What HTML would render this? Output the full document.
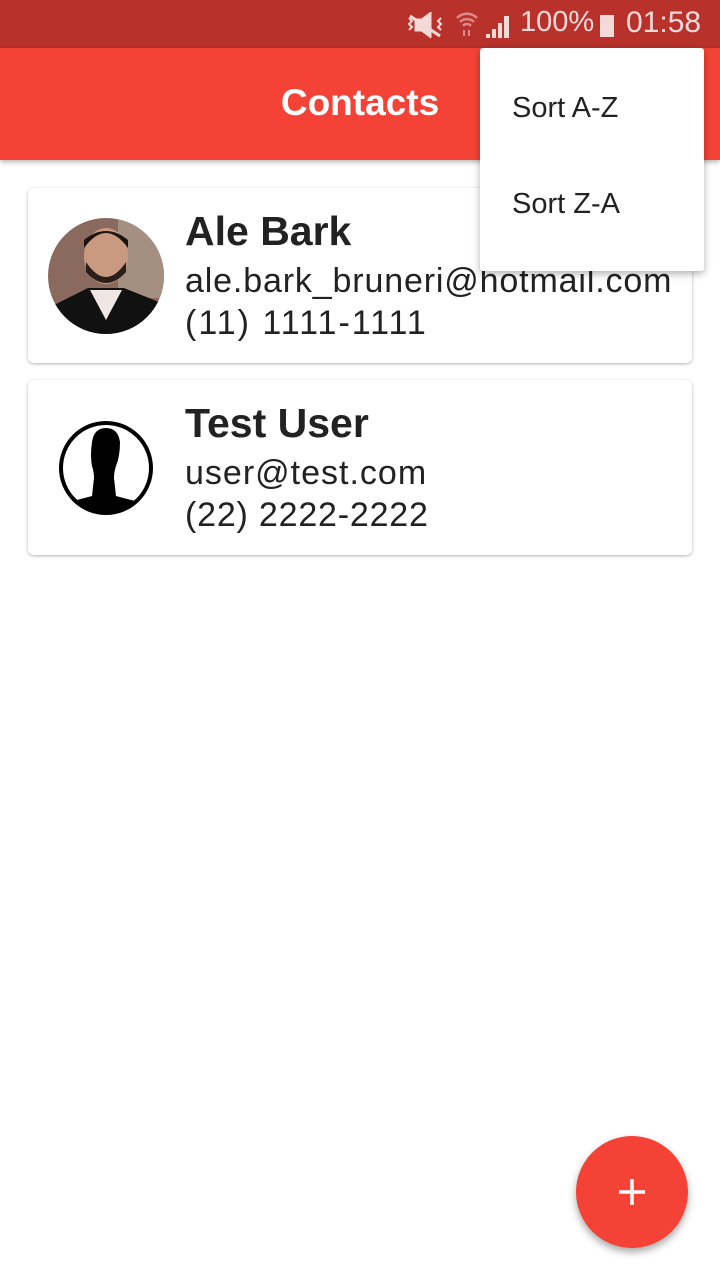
<!DOCTYPE html><html><head><style>
body{margin:0;width:720px;height:1280px;background:#fff;font-family:"Liberation Sans",sans-serif;position:relative;overflow:hidden}
.sb{position:absolute;top:0;left:0;width:720px;height:48px;background:#b8322b;color:#f3d9d7;font-size:30px}
.ab{position:absolute;top:48px;left:0;width:720px;height:112px;background:#f44336;box-shadow:0 2px 5px rgba(0,0,0,.3)}
.ab h1{margin:0;position:absolute;left:0;width:720px;text-align:center;top:34px;font-size:37px;color:#fff;font-weight:bold}
.card{position:absolute;left:28px;width:664px;height:175px;background:#fff;border-radius:6px;box-shadow:0 1px 3px rgba(0,0,0,.3)}
.t{position:absolute;left:157px;color:#222;white-space:nowrap}
.n{top:20px;font-size:41px;font-weight:bold}
.e{top:74px;font-size:34px}
.p{top:116px;font-size:34px}
.menu{position:absolute;left:480px;top:48px;width:224px;height:223px;background:#fff;box-shadow:0 3px 8px rgba(0,0,0,.3);border-radius:3px}
.menu div{position:absolute;left:32px;font-size:29px;color:#222}
.fab{position:absolute;left:576px;top:1136px;width:112px;height:112px;border-radius:50%;background:#f44336;box-shadow:0 4px 8px rgba(0,0,0,.35)}
</style></head><body>
<div class="sb">
<svg style="position:absolute;left:406px;top:12px" width="38" height="26" viewBox="0 0 38 26" fill="none" stroke="#f3d9d7" stroke-width="3"><path d="M10 8h6l8-6v22l-8-6h-6z" fill="#f3d9d7"/><path d="M4 4l30 20"/><path d="M3 6l3 3-3 3 3 3-3 3M35 6l-3 3 3 3-3 3 3 3" stroke-width="2"/></svg>
<svg style="position:absolute;left:456px;top:12px" width="22" height="26" viewBox="0 0 22 26"><path d="M1 6a14 14 0 0 1 20 0M4 10a10 10 0 0 1 14 0M7 14a5 5 0 0 1 8 0" stroke="#d88" stroke-width="2.5" fill="none"/><path d="M8 18v6M13 18v6" stroke="#d88" stroke-width="2"/></svg>
<svg style="position:absolute;left:486px;top:14px" width="26" height="24"><path d="M0 24h4v-4h-4zM6 24h4v-9h-4zM12 24h4v-15h-4zM18 24h5v-22h-5z" fill="#f3d9d7"/></svg>
<span style="position:absolute;left:520px;top:6px;font-size:29px">100%</span>
<div style="position:absolute;left:600px;top:15px;width:14px;height:22px;background:#f3d9d7"></div>
<span style="position:absolute;left:626px;top:6px">01:58</span>
</div>
<div class="ab"><h1>Contacts</h1></div>
<div class="card" style="top:188px">
<svg style="position:absolute;left:20px;top:30px" width="116" height="116" viewBox="0 0 116 116"><defs><clipPath id="c"><circle cx="58" cy="58" r="58"/></clipPath></defs><g clip-path="url(#c)"><rect width="116" height="116" fill="#8a6a5e"/><rect x="70" width="46" height="80" fill="#a58f80"/><path d="M0 90l40-20h36l40 16v30H0z" fill="#111"/><path d="M42 72l16 30 16-30z" fill="#f0e6e6"/><ellipse cx="58" cy="38" rx="22" ry="28" fill="#c99a80"/><path d="M36 30q22-30 44 0v-8q-22-18-44 0z" fill="#1a1512"/><path d="M38 44q20 30 40 0v10q-20 22-40 0z" fill="#2a1e18"/></g></svg>
<div class="t n">Ale Bark</div><div class="t e" style="letter-spacing:0.85px">ale.bark_bruneri@hotmail.com</div><div class="t p" style="letter-spacing:2px">(11) 1111-1111</div></div>
<div class="card" style="top:380px">
<svg style="position:absolute;left:30px;top:40px" width="96" height="96" viewBox="0 0 96 96"><defs><clipPath id="d"><circle cx="48" cy="48" r="44"/></clipPath></defs><circle cx="48" cy="48" r="45" fill="#fff" stroke="#000" stroke-width="4"/><g clip-path="url(#d)"><path d="M34 22q2-14 14-14t14 14q0 14-4 24q-2 6-2 12l2 18 30 8v20H4V84l30-8 2-18q0-6-2-12q-2-10 0-24z" fill="#000"/></g></svg>
<div class="t n">Test User</div><div class="t e" style="letter-spacing:1px">user@test.com</div><div class="t p" style="letter-spacing:0.8px">(22) 2222-2222</div></div>
<div class="menu"><div style="top:44px">Sort A-Z</div><div style="top:140px">Sort Z-A</div></div>
<div class="fab"><svg width="112" height="112"><path d="M56 43v26M43 56h26" stroke="#fff" stroke-width="3.5"/></svg></div>
</body></html>
